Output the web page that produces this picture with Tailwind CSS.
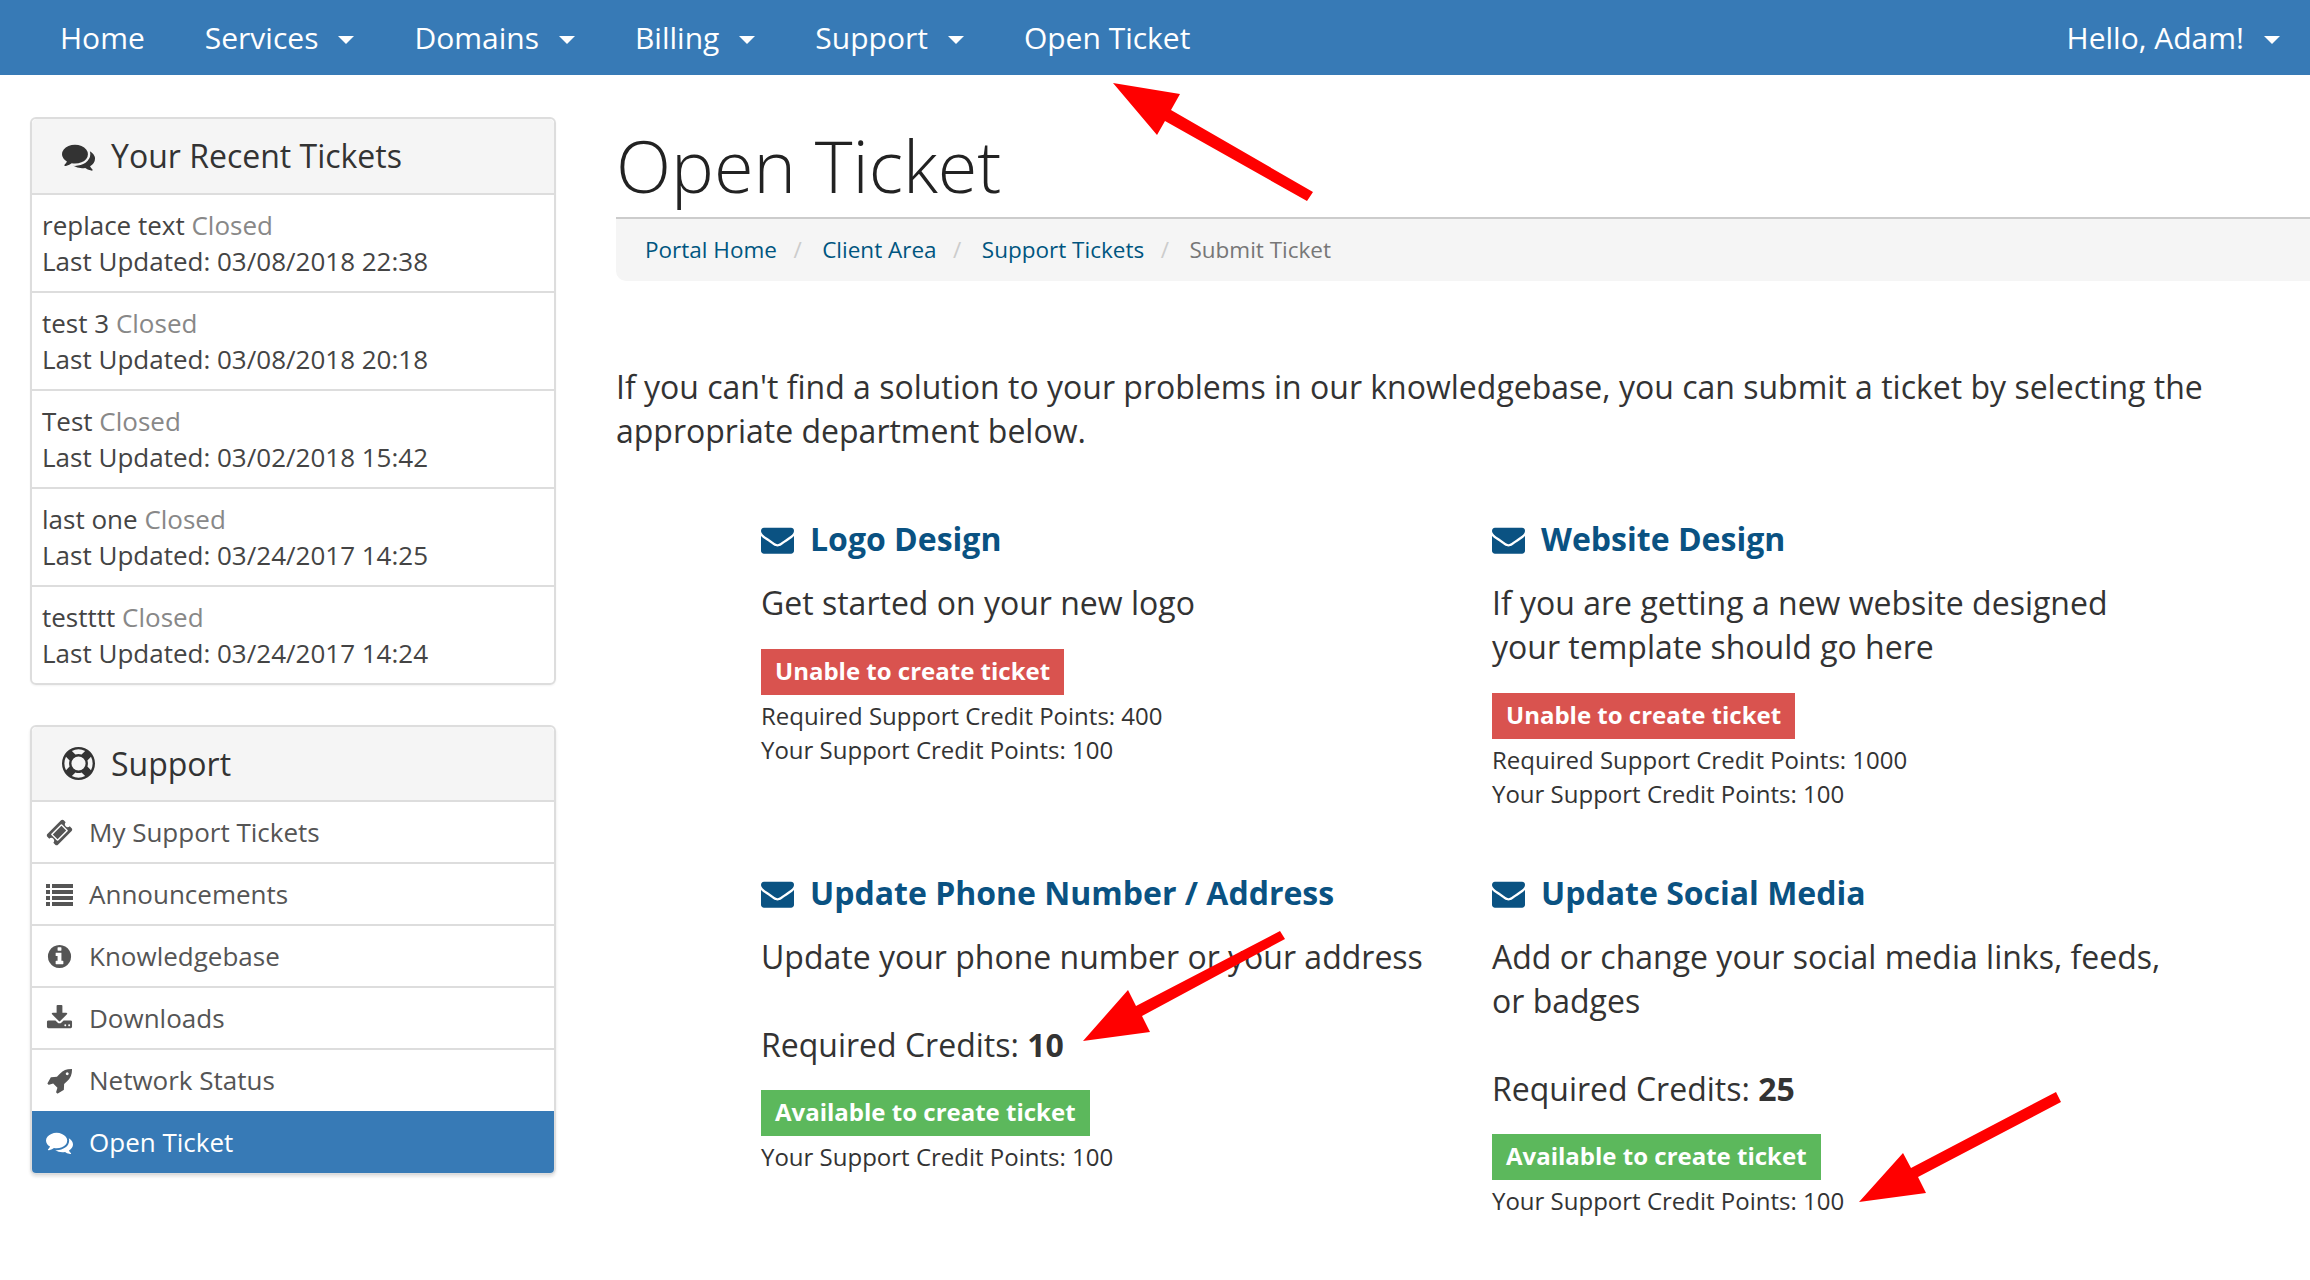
<!DOCTYPE html>
<html lang="en">
<head>
    <meta charset="UTF-8">
    <script src="https://cdn.jsdelivr.net/npm/@tailwindcss/browser@4"></script>
    <title>Open Ticket</title>
</head>
<body class="bg-white text-[#333] font-['Open_Sans',sans-serif] overflow-hidden">
    <!-- svg icon defs -->
    <svg class="hidden">
        <symbol id="i-comments" viewBox="0 0 1792 1792"><path d="M1408 768q0 139-94 257t-256.500 186.500-353.500 68.500q-86 0-176-16-124 88-278 128-36 9-86 16h-3q-11 0-20.500-8t-11.500-21q-1-3-1-6.500t.5-6.500 2-6l2.500-5 3.500-5.500 4-5 4.500-5 4-4.500q5-6 23-25t26-29.500 22.500-29 25-38.500 20.500-44q-124-72-195-177t-71-224q0-139 94-257t256.500-186.500 353.500-68.500 353.500 68.500 256.500 186.500 94 257zm384 256q0 120-71 224.500t-195 176.500q10 24 20.500 44t25 38.500 22.500 29 26 29.500 23 25q1 1 4 4.500t4.500 5 4 5 3.500 5.500l2.500 5 2 6 .5 6.500-1 6.500q-3 14-13 22t-22 7q-50-7-86-16-154-40-278-128-90 16-176 16-271 0-472-132 58 4 88 4 161 0 309-45t264-129q125-92 192-212t67-254q0-77-23-152 129 71 204 178t75 230z"/></symbol>
        <symbol id="i-envelope" viewBox="0 0 1792 1792"><path d="M1792 710v794q0 66-47 113t-113 47h-1472q-66 0-113-47t-47-113v-794q44 49 101 87 362 246 497 345 57 42 92.500 65.500t94.500 48 110 24.500h2q51 0 110-24.500t94.500-48 92.500-65.500q170-123 498-345 57-39 100-87zm0-294q0 79-49 151t-122 123q-376 261-468 325-10 7-42.500 30.500t-54 38-52 32.500-57.500 27-50 9h-2q-23 0-50-9t-57.500-27-52-32.500-54-38-42.500-30.500q-91-64-262-182.500t-205-142.500q-62-42-117-115.500t-55-136.500q0-78 41.500-130t118.500-52h1472q65 0 112.500 47t47.500 113z"/></symbol>
    </svg>

    <!-- top nav -->
    <nav class="h-[75px] bg-[#377ab6] text-white text-[30px] flex items-center pl-[30px] pr-[30px]">
        <a class="px-[30px]">Home</a>
        <a class="px-[30px] flex items-center">Services<span class="ml-[20px] mt-[4px] w-0 h-0 border-x-[8px] border-x-transparent border-t-[8px] border-t-white"></span></a>
        <a class="px-[30px] flex items-center">Domains<span class="ml-[20px] mt-[4px] w-0 h-0 border-x-[8px] border-x-transparent border-t-[8px] border-t-white"></span></a>
        <a class="px-[30px] flex items-center">Billing<span class="ml-[20px] mt-[4px] w-0 h-0 border-x-[8px] border-x-transparent border-t-[8px] border-t-white"></span></a>
        <a class="px-[30px] flex items-center">Support<span class="ml-[20px] mt-[4px] w-0 h-0 border-x-[8px] border-x-transparent border-t-[8px] border-t-white"></span></a>
        <a class="px-[30px]">Open Ticket</a>
        <a class="ml-auto flex items-center">Hello, Adam!<span class="ml-[20px] mt-[4px] w-0 h-0 border-x-[8px] border-x-transparent border-t-[8px] border-t-white"></span></a>
    </nav>

    <div class="flex pl-[30px]">
        <!-- sidebar -->
        <aside class="w-[526px] shrink-0 pt-[42px]">
            <div class="border-2 border-[#ddd] rounded-[6px] shadow-[0_1px_2px_rgba(0,0,0,0.05)] mb-[40px]">
                <div class="h-[76px] bg-[#f5f5f5] border-b-2 border-[#ddd] flex items-center pl-[30px] text-[32px] rounded-t-[5px]">
                    <svg class="w-[33px] h-[33px] fill-[#333] mr-[16px]"><use href="#i-comments"/></svg>Your Recent Tickets
                </div>
                <div class="text-[26px] leading-[36px] text-[#444]">
                    <div class="h-[98px] pl-[10px] pt-[12px] border-b-2 border-[#ddd]">replace text <span class="text-[#888]">Closed</span><br>Last Updated: 03/08/2018 22:38</div>
                    <div class="h-[98px] pl-[10px] pt-[12px] border-b-2 border-[#ddd]">test 3 <span class="text-[#888]">Closed</span><br>Last Updated: 03/08/2018 20:18</div>
                    <div class="h-[98px] pl-[10px] pt-[12px] border-b-2 border-[#ddd]">Test <span class="text-[#888]">Closed</span><br>Last Updated: 03/02/2018 15:42</div>
                    <div class="h-[98px] pl-[10px] pt-[12px] border-b-2 border-[#ddd]">last one <span class="text-[#888]">Closed</span><br>Last Updated: 03/24/2017 14:25</div>
                    <div class="h-[96px] pl-[10px] pt-[12px]">testttt <span class="text-[#888]">Closed</span><br>Last Updated: 03/24/2017 14:24</div>
                </div>
            </div>

            <div class="border-2 border-[#ddd] rounded-[6px] shadow-[0_2px_3px_rgba(0,0,0,0.1)]">
                <div class="h-[75px] bg-[#f5f5f5] border-b-2 border-[#ddd] flex items-center pl-[30px] text-[32px] rounded-t-[5px]">
                    <svg class="w-[33px] h-[33px] fill-[#333] mr-[16px]" viewBox="0 0 1792 1792"><path d="M896 0q182 0 348 71t286 191 191 286 71 348-71 348-191 286-286 191-348 71-348-71-286-191-191-286-71-348 71-348 191-286 286-191 348-71zm0 128q-190 0-361 90l194 194q82-28 167-28t167 28l194-194q-171-90-361-90zm-678 1129l194-194q-28-82-28-167t28-167l-194-194q-90 171-90 361t90 361zm678 407q190 0 361-90l-194-194q-82 28-167 28t-167-28l-194 194q171 90 361 90zm0-384q159 0 271.500-112.500t112.500-271.500-112.500-271.500-271.500-112.500-271.500 112.500-112.500 271.500 112.500 271.500 271.500 112.500zm484-217l194 194q90-171 90-361t-90-361l-194 194q28 82 28 167t-28 167z"/></svg>Support
                </div>
                <div class="text-[26px] text-[#555]">
                    <div class="h-[62px] flex items-center pl-[14px] border-b-2 border-[#ddd]">
                        <svg class="w-[27px] h-[27px] fill-[#555] mr-[16px]" viewBox="0 0 1792 1792"><path d="M1024 452l316 316-572 572-316-316zm-211 979l618-618q19-19 19-45t-19-45l-362-362q-18-18-45-18t-45 18l-618 618q-19 19-19 45t19 45l362 362q18 18 45 18t45-18zm889-637l-907 908q-37 37-90.500 37t-90.500-37l-126-126q56-56 56-136t-56-136-136-56-136 56l-125-126q-37-37-37-90.500t37-90.500l907-906q37-37 90.500-37t90.500 37l125 125q-56 56-56 136t56 136 136 56 136-56l126 125q37 37 37 90.500t-37 90.500z"/></svg>My Support Tickets
                    </div>
                    <div class="h-[62px] flex items-center pl-[14px] border-b-2 border-[#ddd]">
                        <svg class="w-[27px] h-[27px] fill-[#555] mr-[16px]" viewBox="0 0 27 27"><rect x="0" y="3" width="4" height="4"/><rect x="6" y="3" width="21" height="4"/><rect x="0" y="9" width="4" height="4"/><rect x="6" y="9" width="21" height="4"/><rect x="0" y="15" width="4" height="4"/><rect x="6" y="15" width="21" height="4"/><rect x="0" y="21" width="4" height="4"/><rect x="6" y="21" width="21" height="4"/></svg>Announcements
                    </div>
                    <div class="h-[62px] flex items-center pl-[14px] border-b-2 border-[#ddd]">
                        <svg class="w-[27px] h-[27px] fill-[#555] mr-[16px]" viewBox="0 0 1792 1792"><path d="M1152 1376v-160q0-14-9-23t-23-9h-96v-512q0-14-9-23t-23-9h-320q-14 0-23 9t-9 23v160q0 14 9 23t23 9h96v320h-96q-14 0-23 9t-9 23v160q0 14 9 23t23 9h448q14 0 23-9t9-23zm-128-896v-160q0-14-9-23t-23-9h-192q-14 0-23 9t-9 23v160q0 14 9 23t23 9h192q14 0 23-9t9-23zm640 416q0 209-103 385.500t-279.500 279.500-385.500 103-385.500-103-279.500-279.500-103-385.500 103-385.500 279.500-279.500 385.500-103 385.500 103 279.500 279.500 103 385.500z"/></svg>Knowledgebase
                    </div>
                    <div class="h-[62px] flex items-center pl-[14px] border-b-2 border-[#ddd]">
                        <svg class="w-[27px] h-[27px] fill-[#555] mr-[16px]" viewBox="0 0 1792 1792"><path d="M1344 1344q0-26-19-45t-45-19-45 19-19 45 19 45 45 19 45-19 19-45zm256 0q0-26-19-45t-45-19-45 19-19 45 19 45 45 19 45-19 19-45zm128-224v320q0 40-28 68t-68 28h-1472q-40 0-68-28t-28-68v-320q0-40 28-68t68-28h465l135 136q58 56 136 56t136-56l136-136h464q40 0 68 28t28 68zm-325-569q17 41-14 70l-448 448q-18 19-45 19t-45-19l-448-448q-31-29-14-70 17-39 59-39h256v-448q0-26 19-45t45-19h256q26 0 45 19t19 45v448h256q42 0 59 39z"/></svg>Downloads
                    </div>
                    <div class="h-[61px] flex items-center pl-[14px]">
                        <svg class="w-[27px] h-[27px] fill-[#555] mr-[16px]" viewBox="0 0 1792 1792"><path d="M1504 448q0-40-28-68t-68-28-68 28-28 68 28 68 68 28 68-28 28-68zm224-288q0 249-75.500 430.500t-253.500 360.500q-81 80-195 176l-20 379q-2 16-16 26l-384 224q-7 4-16 4-12 0-23-9l-64-64q-13-14-8-32l85-276-281-281-276 85q-3 1-9 1-14 0-23-9l-64-64q-17-19-5-39l224-384q10-14 26-16l379-20q96-114 176-195 188-187 358-258t431-71q14 0 24 9.500t10 22.500z"/></svg>Network Status
                    </div>
                    <div class="h-[62px] flex items-center pl-[14px] bg-[#377ab6] text-white rounded-b-[4px]">
                        <svg class="w-[27px] h-[27px] fill-white mr-[16px]"><use href="#i-comments"/></svg>Open Ticket
                    </div>
                </div>
            </div>
        </aside>

        <!-- main column -->
        <main class="ml-[60px] flex-1 min-w-0">
            <h1 class="pt-[50px] text-[72px] leading-[80px] font-light mb-[12px] text-[#222]">Open Ticket</h1>
            <div class="h-[64px] bg-[#f5f5f5] border-t-2 border-[#ccc] rounded-bl-[10px] flex items-center pl-[29px] text-[22.5px] text-[#005580]">
                <a>Portal Home</a><span class="text-[#ccc] pl-[16.5px] pr-[20.5px]">/</span>
                <a>Client Area</a><span class="text-[#ccc] pl-[16.5px] pr-[20.5px]">/</span>
                <a>Support Tickets</a><span class="text-[#ccc] pl-[16.5px] pr-[20.5px]">/</span>
                <span class="text-[#777]">Submit Ticket</span>
            </div>

            <p class="mt-[84px] text-[32px] leading-[44px] w-[1640px]">If you can't find a solution to your problems in our knowledgebase, you can submit a ticket by selecting the appropriate department below.</p>

            <div class="ml-[145px] mt-[64px] grid grid-cols-[731px_731px]">
                <!-- Logo Design -->
                <div class="w-[691px] h-[354px]">
                    <h3 class="flex items-center text-[32px] leading-[44px] font-bold text-[#0a5282]"><svg class="w-[33px] h-[33px] fill-[#0a5282] mr-[16px]"><use href="#i-envelope"/></svg>Logo Design</h3>
                    <p class="mt-[20px] text-[32px] leading-[44px]">Get started on your new logo</p>
                    <span class="mt-[24px] inline-block h-[46px] leading-[44px] px-[14px] bg-[#d9534f] text-white font-bold text-[24px]">Unable to create ticket</span>
                    <p class="mt-[4px] text-[24px] leading-[34px]">Required Support Credit Points: 400<br>Your Support Credit Points: 100</p>
                </div>
                <!-- Website Design -->
                <div class="w-[691px] h-[354px]">
                    <h3 class="flex items-center text-[32px] leading-[44px] font-bold text-[#0a5282]"><svg class="w-[33px] h-[33px] fill-[#0a5282] mr-[16px]"><use href="#i-envelope"/></svg>Website Design</h3>
                    <p class="mt-[20px] text-[32px] leading-[44px]">If you are getting a new website designed your template should go here</p>
                    <span class="mt-[24px] inline-block h-[46px] leading-[44px] px-[14px] bg-[#d9534f] text-white font-bold text-[24px]">Unable to create ticket</span>
                    <p class="mt-[4px] text-[24px] leading-[34px]">Required Support Credit Points: 1000<br>Your Support Credit Points: 100</p>
                </div>
                <!-- Update Phone -->
                <div class="w-[691px]">
                    <h3 class="flex items-center text-[32px] leading-[44px] font-bold text-[#0a5282]"><svg class="w-[33px] h-[33px] fill-[#0a5282] mr-[16px]"><use href="#i-envelope"/></svg>Update Phone Number / Address</h3>
                    <p class="mt-[20px] text-[32px] leading-[44px]">Update your phone number or your address</p>
                    <p class="mt-[44px] text-[32px] leading-[44px]">Required Credits: <b>10</b></p>
                    <span class="mt-[23px] inline-block h-[46px] leading-[44px] px-[14px] bg-[#5cb85c] text-white font-bold text-[24px]">Available to create ticket</span>
                    <p class="mt-[4px] text-[24px] leading-[34px]">Your Support Credit Points: 100</p>
                </div>
                <!-- Update Social -->
                <div class="w-[691px]">
                    <h3 class="flex items-center text-[32px] leading-[44px] font-bold text-[#0a5282]"><svg class="w-[33px] h-[33px] fill-[#0a5282] mr-[16px]"><use href="#i-envelope"/></svg>Update Social Media</h3>
                    <p class="mt-[20px] text-[32px] leading-[44px]">Add or change your social media links, feeds, or badges</p>
                    <p class="mt-[44px] text-[32px] leading-[44px]">Required Credits: <b>25</b></p>
                    <span class="mt-[23px] inline-block h-[46px] leading-[44px] px-[14px] bg-[#5cb85c] text-white font-bold text-[24px]">Available to create ticket</span>
                    <p class="mt-[4px] text-[24px] leading-[34px]">Your Support Credit Points: 100</p>
                </div>
            </div>
        </main>
    </div>

    <!-- red annotation arrows drawn over the page -->
    <svg class="absolute left-0 top-0 w-[2310px] h-[1280px] pointer-events-none" viewBox="0 0 2310 1280" fill="#ff0000">
        <polygon points="1113,83 1180,94 1171,110 1313,192 1307,201 1165,121 1157,135"/>
        <polygon points="1083,1041 1128,990 1136,1006 1280,931 1285,939 1142,1016 1150,1032"/>
        <polygon points="1859,1202 1903,1153 1911,1168 2056,1092 2061,1102 1918,1177 1926,1193"/>
    </svg>
</body>
</html>
